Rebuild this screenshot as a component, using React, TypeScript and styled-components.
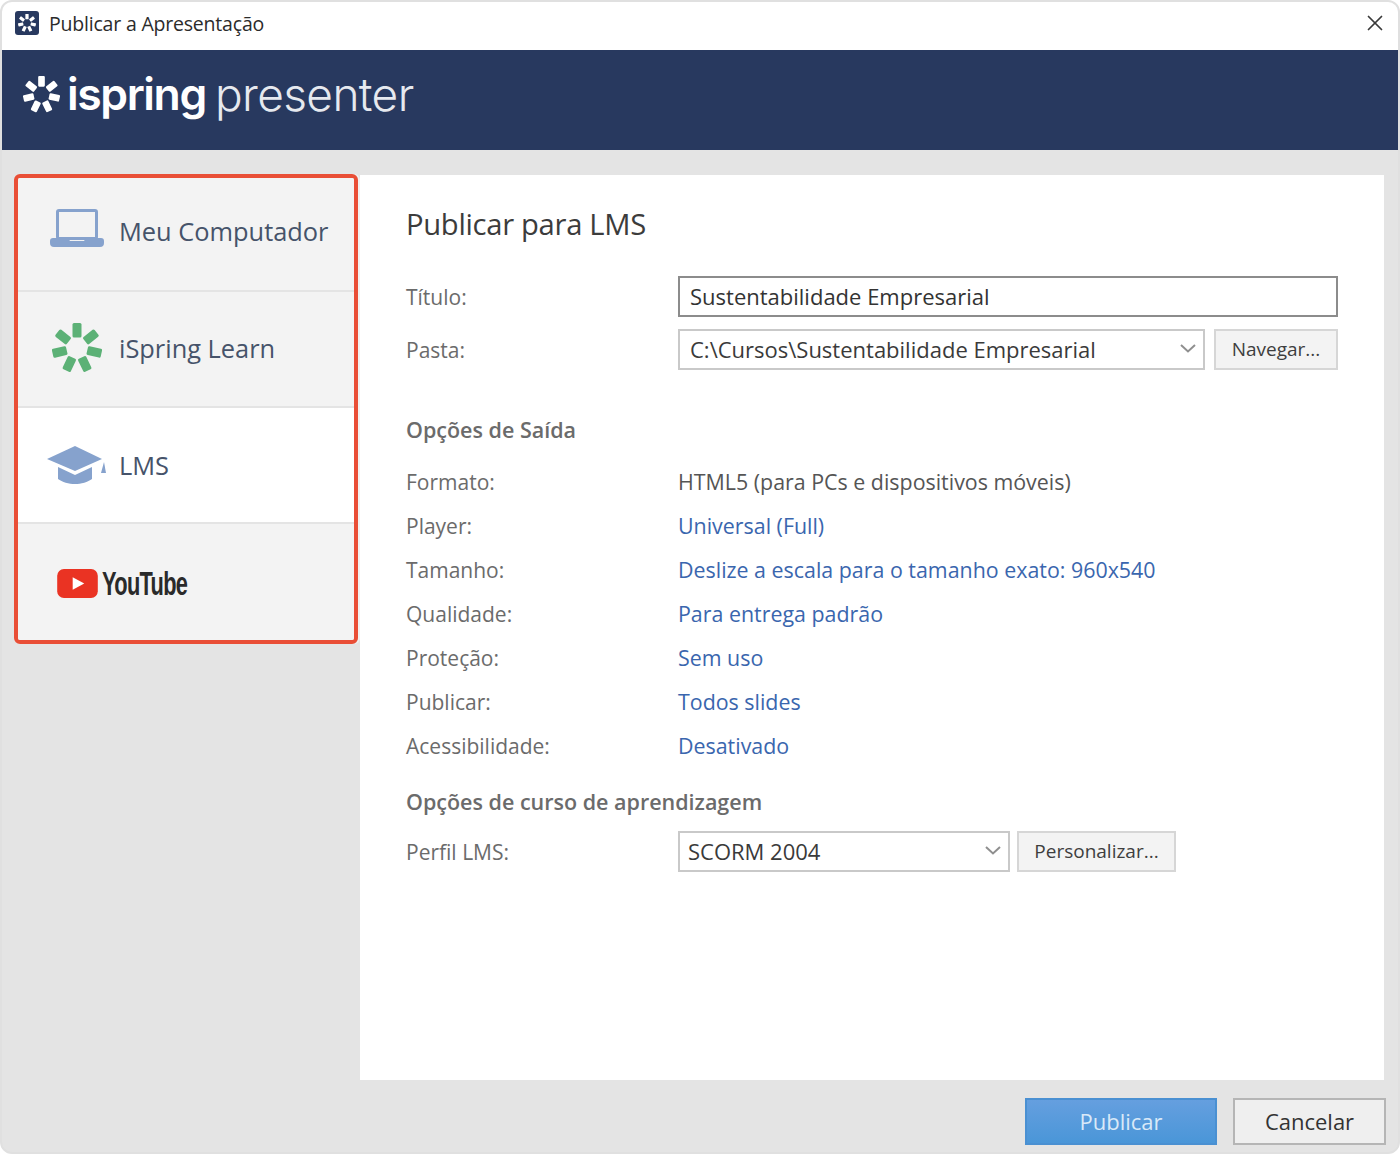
import React from "react";
import styled, { createGlobalStyle } from "styled-components";
import { X } from "lucide-react";

const GlobalStyle = createGlobalStyle`
  html, body {
    margin: 0;
    padding: 0;
    background: #fff;
  }
  * {
    box-sizing: border-box;
  }
`;

const Window = styled.div`
  width: 1400px;
  height: 1154px;
  display: flex;
  flex-direction: column;
  border: 2px solid #e0e0e0;
  border-radius: 12px;
  overflow: hidden;
  background: #e4e4e4;
  font-family: "Open Sans", "Noto Sans", sans-serif;
`;

const TitleBar = styled.div`
  height: 48px;
  flex: none;
  display: flex;
  align-items: center;
  padding: 0 10px 6px 13px;
  background: #fff;
`;

const TitleIcon = styled.div`
  width: 24px;
  height: 24px;
  border-radius: 3px;
  background: #28395f;
  display: flex;
  align-items: center;
  justify-content: center;
`;

const TitleText = styled.div`
  margin-left: 10px;
  font-size: 19.5px;
  color: #2b2b2b;
  letter-spacing: -0.2px;
`;

const CloseButton = styled.div`
  margin-left: auto;
  display: flex;
  color: #3a3a3a;
`;

const Banner = styled.div`
  height: 100px;
  flex: none;
  display: flex;
  align-items: center;
  padding: 0 0 12px 21px;
  background: #28395f;
  color: #fff;
`;

const BrandBold = styled.span`
  margin-left: 7px;
  font-family: "Inter", sans-serif;
  font-size: 44.5px;
  font-weight: 600;
  letter-spacing: -1.4px;
`;

const BrandLight = styled.span`
  margin-left: 9px;
  font-family: "Inter", sans-serif;
  font-size: 46px;
  font-weight: 300;
  letter-spacing: -0.6px;
  color: #e6e9ef;
`;

const Body = styled.div`
  flex: 1;
  min-height: 0;
  display: flex;
  padding: 25px 14px 0 12px;
  gap: 2px;
`;

const Nav = styled.div`
  width: 344px;
  height: 470px;
  margin-top: -1px;
  flex: none;
  display: flex;
  flex-direction: column;
  border: 4px solid #e94e36;
  border-radius: 6px;
  overflow: hidden;
  box-shadow: 2px 0 0 #f1f1f1;
`;

const NavRow = styled.div<{ $h: number; $lift?: number; $drop?: number; $active?: boolean; $last?: boolean }>`
  height: ${(p) => p.$h}px;
  flex: none;
  display: flex;
  align-items: center;
  padding: ${(p) => p.$drop ?? 0}px 0 ${(p) => p.$lift ?? 0}px 28px;
  background: ${(p) => (p.$active ? "#fff" : "#f3f3f3")};
  border-bottom: ${(p) => (p.$last ? "none" : "2px solid #e4e4e4")};
`;

const NavIcon = styled.div<{ $up?: number }>`
  width: 62px;
  flex: none;
  display: flex;
  justify-content: center;
  margin-bottom: ${(p) => p.$up ?? 0}px;
`;

const NavLabel = styled.div`
  margin-left: 11px;
  font-size: 25.4px;
  color: #46536a;
`;

const YouTubeMark = styled.div`
  display: flex;
  align-items: center;
  margin-left: 11px;
`;

const YouTubeWord = styled.span`
  margin-left: 4px;
  font-family: "Liberation Sans", sans-serif;
  font-size: 33px;
  font-weight: 700;
  color: #2a2a2a;
  display: inline-block;
  transform: scaleX(0.66);
  transform-origin: left center;
  letter-spacing: -1px;
`;

const Panel = styled.div`
  flex: 1;
  height: 905px;
  background: #fff;
  padding: 29px 46px 0;
`;

const Heading = styled.div`
  font-size: 29.2px;
  line-height: 40px;
  color: #3c3c3c;
  letter-spacing: -0.3px;
`;

const FormRow = styled.div<{ $top: number }>`
  display: grid;
  grid-template-columns: 272px 1fr;
  align-items: center;
  margin-top: ${(p) => p.$top}px;
`;

const Label = styled.div`
  font-size: 21px;
  color: #6b6b6b;
`;

const TextField = styled.div`
  height: 41px;
  border: 2px solid #8c8c8c;
  padding: 0 0 2px 10px;
  display: flex;
  align-items: center;
  font-size: 22px;
  color: #333;
`;

const Controls = styled.div`
  display: flex;
`;

const Combo = styled.div<{ $w: number; $pad: number }>`
  width: ${(p) => p.$w}px;
  height: 41px;
  border: 2px solid #c9c9c9;
  padding: 0 7px 2px ${(p) => p.$pad}px;
  display: flex;
  align-items: center;
  justify-content: space-between;
  font-size: 22px;
  color: #3a3a3a;
  background: #fff;
`;

const SmallButton = styled.div<{ $w: number; $gap: number }>`
  width: ${(p) => p.$w}px;
  height: 41px;
  margin-left: ${(p) => p.$gap}px;
  border: 2px solid #d6d6d6;
  background: #f3f3f3;
  padding-bottom: 2px;
  display: flex;
  align-items: center;
  justify-content: center;
  font-size: 19px;
  color: #3e3e3e;
`;

const SectionTitle = styled.div<{ $top: number }>`
  margin-top: ${(p) => p.$top}px;
  font-size: 21.5px;
  line-height: 30px;
  font-weight: 600;
  color: #6b6b6b;
`;

const InfoList = styled.div`
  margin-top: 15px;
  display: flex;
  flex-direction: column;
`;

const InfoRow = styled.div`
  height: 44px;
  display: grid;
  grid-template-columns: 272px 1fr;
  align-items: center;
`;

const Value = styled.div<{ $link?: boolean }>`
  font-size: 21.4px;
  padding-bottom: 2px;
  color: ${(p) => (p.$link ? "#3a66ae" : "#555")};
`;

const Footer = styled.div`
  height: 72px;
  flex: none;
  display: flex;
  justify-content: flex-end;
  gap: 16px;
  padding: 18px 12px 0 0;
`;

const PrimaryButton = styled.div`
  width: 192px;
  height: 47px;
  border: 2px solid #4a90d2;
  background: linear-gradient(#659fdf, #4a96d8);
  padding-bottom: 2px;
  display: flex;
  align-items: center;
  justify-content: center;
  font-size: 22px;
  color: #d9e9f8;
`;

const CancelButton = styled.div`
  width: 153px;
  height: 47px;
  border: 2px solid #b5b5b5;
  background: #efefef;
  padding-bottom: 2px;
  display: flex;
  align-items: center;
  justify-content: center;
  font-size: 22px;
  color: #333;
`;

function Spinner({ size, color }: { size: number; color: string }) {
  return (
    <svg width={size} height={size} viewBox="-50 -50 100 100">
      {[0, 51.4, 102.8, 154.2, 205.7, 257.1, 308.5].map((a) => (
        <rect key={a} x="-9" y="-50" width="18" height="29" rx="3" fill={color} transform={`rotate(${a})`} />
      ))}
    </svg>
  );
}

function Chevron() {
  return (
    <svg width="16" height="9" viewBox="0 0 16 9">
      <path d="M1 1l7 6.5L15 1" fill="none" stroke="#8f8f8f" strokeWidth="2" />
    </svg>
  );
}

function LaptopIcon() {
  return (
    <svg width="54" height="38" viewBox="0 0 54 38">
      <rect x="7.5" y="1.5" width="39" height="28" rx="1.5" fill="none" stroke="#86a2cd" strokeWidth="3" />
      <path d="M3 29h15l2 3h14l2-3h15a3 3 0 0 1 3 3v2a4 4 0 0 1-4 4H4a4 4 0 0 1-4-4v-2a3 3 0 0 1 3-3z" fill="#86a2cd" />
    </svg>
  );
}

function CapIcon() {
  return (
    <svg width="60" height="38" viewBox="0 0 60 38">
      <path d="M28 0 55 13 28 25 0 13z" fill="#86a2cd" />
      <path d="M11 21 28 29 45 21v12c-4 3-11 5-17 5s-13-2-17-5z" fill="#86a2cd" />
      <path d="M57 16l2 11h-5z" fill="#86a2cd" />
    </svg>
  );
}

function YouTubeIcon() {
  return (
    <svg width="41" height="29" viewBox="0 0 42 30">
      <rect width="42" height="30" rx="7" fill="#ea3323" />
      <path d="M16 8.5 28 15 16 21.5z" fill="#fff" />
    </svg>
  );
}

const info = [
  { label: "Formato:", value: "HTML5 (para PCs e dispositivos móveis)", link: false },
  { label: "Player:", value: "Universal (Full)", link: true },
  { label: "Tamanho:", value: "Deslize a escala para o tamanho exato: 960x540", link: true },
  { label: "Qualidade:", value: "Para entrega padrão", link: true },
  { label: "Proteção:", value: "Sem uso", link: true },
  { label: "Publicar:", value: "Todos slides", link: true },
  { label: "Acessibilidade:", value: "Desativado", link: true },
];

export default function App() {
  return (
    <>
      <GlobalStyle />
      <Window>
        <TitleBar>
          <TitleIcon>
            <Spinner size={18} color="#fff" />
          </TitleIcon>
          <TitleText>Publicar a Apresentação</TitleText>
          <CloseButton>
            <X size={26} strokeWidth={1.6} />
          </CloseButton>
        </TitleBar>
        <Banner>
          <Spinner size={37} color="#fff" />
          <BrandBold>ispring</BrandBold>
          <BrandLight>presenter</BrandLight>
        </Banner>
        <Body>
          <Nav>
            <NavRow $h={114} $lift={6}>
              <NavIcon $up={6}>
                <LaptopIcon />
              </NavIcon>
              <NavLabel>Meu Computador</NavLabel>
            </NavRow>
            <NavRow $h={116} $lift={2}>
              <NavIcon>
                <Spinner size={50} color="#5cb176" />
              </NavIcon>
              <NavLabel>iSpring Learn</NavLabel>
            </NavRow>
            <NavRow $h={116} $active>
              <NavIcon>
                <CapIcon />
              </NavIcon>
              <NavLabel>LMS</NavLabel>
            </NavRow>
            <NavRow $h={116} $drop={3} $last>
              <YouTubeMark>
                <YouTubeIcon />
                <YouTubeWord>YouTube</YouTubeWord>
              </YouTubeMark>
            </NavRow>
          </Nav>
          <Panel>
            <Heading>Publicar para LMS</Heading>
            <FormRow $top={32}>
              <Label>Título:</Label>
              <TextField>Sustentabilidade Empresarial</TextField>
            </FormRow>
            <FormRow $top={12}>
              <Label>Pasta:</Label>
              <Controls>
                <Combo $w={527} $pad={10}>
                  C:\Cursos\Sustentabilidade Empresarial
                  <Chevron />
                </Combo>
                <SmallButton $w={124} $gap={9}>Navegar...</SmallButton>
              </Controls>
            </FormRow>
            <SectionTitle $top={45}>Opções de Saída</SectionTitle>
            <InfoList>
              {info.map((row) => (
                <InfoRow key={row.label}>
                  <Label>{row.label}</Label>
                  <Value $link={row.link}>{row.value}</Value>
                </InfoRow>
              ))}
            </InfoList>
            <SectionTitle $top={19}>Opções de curso de aprendizagem</SectionTitle>
            <FormRow $top={14}>
              <Label>Perfil LMS:</Label>
              <Controls>
                <Combo $w={332} $pad={8}>
                  SCORM 2004
                  <Chevron />
                </Combo>
                <SmallButton $w={159} $gap={7}>Personalizar...</SmallButton>
              </Controls>
            </FormRow>
          </Panel>
        </Body>
        <Footer>
          <PrimaryButton>Publicar</PrimaryButton>
          <CancelButton>Cancelar</CancelButton>
        </Footer>
      </Window>
    </>
  );
}
